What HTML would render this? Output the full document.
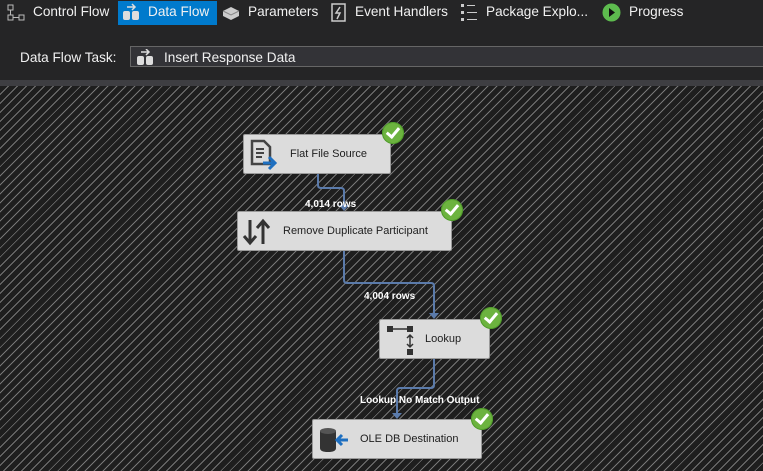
<!DOCTYPE html>
<html><head><style>
body{margin:0;width:763px;height:471px;overflow:hidden;background:#252526;font-family:"Liberation Sans",sans-serif;position:relative}
.t{position:absolute;color:#f1f1f1;font-size:13.6px;white-space:nowrap}
.canvas{position:absolute;left:0;top:86px;width:763px;height:385px;background:#1e1e1e repeating-linear-gradient(135deg,#1e1e1e 0,#1e1e1e 5.4px,#767676 5.4px,#767676 6.4px)}
.box{position:absolute;background:#dcdcdc;border:1px solid #9a9a9a;border-radius:2px;font-size:11px;color:#1e1e1e;box-sizing:border-box}
.box span{position:absolute;top:13px}
.chk{position:absolute;width:22px;height:22px;border-radius:50%;background:#6cb33f;box-shadow:inset 0 0 0 1px #4e9a2a}
.chk:after{content:"";position:absolute;left:7px;top:3px;width:5px;height:10px;border:solid #fff;border-width:0 3px 3px 0;transform:rotate(40deg)}
.lbl{position:absolute;color:#fff;font-size:10px;font-weight:bold;white-space:nowrap}
</style></head><body>
<div style="position:absolute;left:118px;top:1px;width:99px;height:24px;background:#007acc"></div>
<svg style="position:absolute;left:7px;top:4px" width="18" height="17"><rect x="1" y="1" width="5" height="5" fill="none" stroke="#bbb"/><rect x="1" y="11" width="5" height="5" fill="none" stroke="#bbb"/><rect x="12" y="11" width="5" height="5" fill="none" stroke="#bbb"/><path d="M3.5 6v5M6 13.5h6" stroke="#bbb"/></svg>
<div class="t" style="left:33px;top:4px">Control Flow</div>
<svg style="position:absolute;left:121px;top:3px" width="20" height="19"><rect x="2" y="8" width="7" height="9" rx="2" fill="#ddd"/><rect x="11" y="8" width="7" height="9" rx="2" fill="#ddd"/><path d="M6 4h8M11 1l3 3-3 3" stroke="#ddd" fill="none" stroke-width="1.5"/></svg>
<div class="t" style="left:148px;top:4px">Data Flow</div>
<svg style="position:absolute;left:222px;top:5px" width="18" height="15"><path d="M1 6l8-4 8 4v5l-8 4-8-4z" fill="#ccc"/><path d="M1 6l8 4 8-4" stroke="#888" fill="none"/></svg>
<div class="t" style="left:248px;top:4px">Parameters</div>
<svg style="position:absolute;left:331px;top:3px" width="15" height="19"><rect x="1" y="1" width="13" height="17" fill="none" stroke="#ccc" stroke-width="1.5"/><path d="M9 4l-4 6h4l-3 6" stroke="#ccc" fill="none" stroke-width="1.5"/></svg>
<div class="t" style="left:355px;top:4px">Event Handlers</div>
<svg style="position:absolute;left:460px;top:3px" width="18" height="19"><rect x="1" y="1" width="3" height="3" fill="#ccc"/><rect x="1" y="8" width="3" height="3" fill="#ccc"/><rect x="1" y="15" width="3" height="3" fill="#ccc"/><path d="M7 2.5h8M7 9.5h10M7 16.5h10" stroke="#ccc"/></svg>
<div class="t" style="left:486px;top:4px">Package Explo...</div>
<svg style="position:absolute;left:602px;top:3px" width="19" height="19"><circle cx="9.5" cy="9.5" r="9" fill="#5dbb4e"/><path d="M7 5l6 4.5-6 4.5z" fill="#111"/></svg>
<div class="t" style="left:629px;top:4px">Progress</div>
<div class="t" style="left:20px;top:50px">Data Flow Task:</div>
<div style="position:absolute;left:130px;top:46px;width:640px;height:21px;background:#333337;border:1px solid #666;box-sizing:border-box"></div>
<svg style="position:absolute;left:136px;top:49px" width="20" height="17"><rect x="1" y="7" width="7" height="9" rx="2" fill="#ddd"/><rect x="10" y="7" width="7" height="9" rx="2" fill="#ddd"/><path d="M5 3h8M10 0l3 3-3 3" stroke="#ddd" fill="none" stroke-width="1.5"/></svg>
<div class="t" style="left:164px;top:50px">Insert Response Data</div>
<div style="position:absolute;left:0;top:80px;width:763px;height:6px;background:#3e3e42"></div>
<div class="canvas"></div>
<svg style="position:absolute;left:0;top:0" width="763" height="471" fill="none">
<g stroke="#5b7bab" stroke-width="2">
<path d="M318 173v12q0 3 3 3h20q3 0 3 3v16"/>
<path d="M344 250v30q0 3 3 3h84q3 0 3 3v28"/>
<path d="M434 358v27q0 3-3 3h-31q-3 0-3 3v23"/>
</g>
<g fill="#5b7bab"><path d="M339 205h10l-5 6z"/><path d="M429 313h10l-5 6z"/><path d="M392 413h10l-5 6z"/></g>
</svg>
<div class="lbl" style="left:305px;top:199px">4,014 rows</div>
<div class="lbl" style="left:364px;top:291px">4,004 rows</div>
<div class="lbl" style="left:360px;top:395px">Lookup No Match Output</div>
<div class="box" style="left:243px;top:134px;width:148px;height:40px"><svg style="position:absolute;left:5px;top:4px" width="32" height="32"><path d="M3 2h12l6 6v17H3z" fill="none" stroke="#444" stroke-width="2.5"/><path d="M7 10h8M7 14h8M7 18h6" stroke="#444" stroke-width="2"/><path d="M14 24h12M20 18l6 6-6 6" stroke="#1e6fc0" stroke-width="3" fill="none"/></svg><span style="left:46px">Flat File Source</span></div>
<div class="box" style="left:237px;top:211px;width:215px;height:40px"><svg style="position:absolute;left:4px;top:6px" width="30" height="28"><path d="M8 2v22M2 18l6 7 6-7M21 26V4M15 10l6-7 6 7" stroke="#333" stroke-width="3" fill="none"/></svg><span style="left:45px">Remove Duplicate Participant</span></div>
<div class="box" style="left:379px;top:319px;width:111px;height:40px"><svg style="position:absolute;left:5px;top:3px" width="32" height="34"><rect x="2" y="3" width="6" height="6" fill="#333"/><rect x="22" y="3" width="6" height="6" fill="#333"/><rect x="22" y="26" width="6" height="6" fill="#333"/><path d="M8 6h14M25 12v12M22 15l3-3 3 3M22 21l3 3 3-3" stroke="#333" stroke-width="1.5" fill="none"/></svg><span style="left:45px">Lookup</span></div>
<div class="box" style="left:312px;top:419px;width:170px;height:40px"><svg style="position:absolute;left:5px;top:6px" width="32" height="28"><path d="M2 5v17q0 4 8 4t8-4V5z" fill="#333"/><ellipse cx="10" cy="5" rx="8" ry="3" fill="#555"/><path d="M30 14H19M24 9l-5 5 5 5" stroke="#1e6fc0" stroke-width="3" fill="none"/></svg><span style="left:47px">OLE DB Destination</span></div>
<div class="chk" style="left:382px;top:122px"></div>
<div class="chk" style="left:441px;top:199px"></div>
<div class="chk" style="left:480px;top:307px"></div>
<div class="chk" style="left:471px;top:408px"></div>
</body></html>
